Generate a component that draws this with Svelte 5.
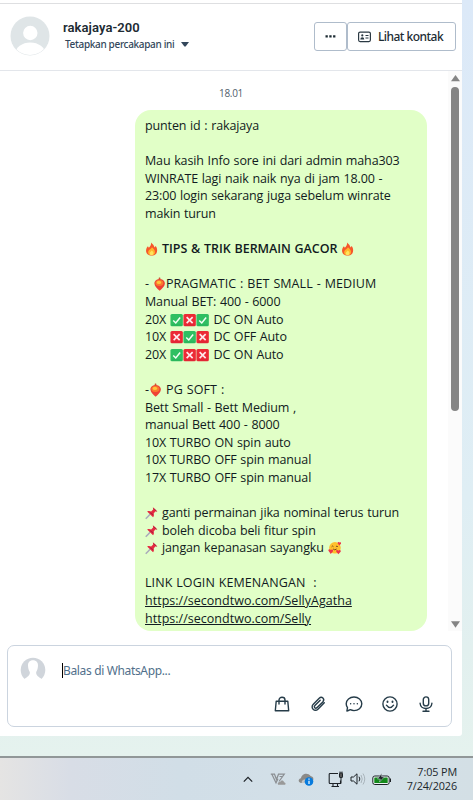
<script lang="ts">
	type Part = { text?: string; icon?: string; bold?: boolean; link?: boolean; wide?: boolean };

	const t = (text: string): Part => ({ text });
	const i = (icon: string): Part => ({ icon });

	const lines: Part[][] = [
		[t('punten id : rakajaya')],
		[],
		[t('Mau kasih Info sore ini dari admin maha303')],
		[t('WINRATE lagi naik naik nya di jam 18.00 -')],
		[t('23:00 login sekarang juga sebelum winrate')],
		[t('makin turun')],
		[],
		[i('fire'), { text: ' TIPS & TRIK BERMAIN GACOR ', bold: true }, i('fire')],
		[],
		[t('- '), i('lantern'), { text: 'PRAGMATIC : BET SMALL - MEDIUM', wide: true }],
		[t('Manual BET: 400 - 6000')],
		[t('20X '), i('check'), i('cross'), i('check'), t(' DC ON Auto')],
		[t('10X '), i('cross'), i('check'), i('cross'), t(' DC OFF Auto')],
		[t('20X '), i('check'), i('cross'), i('cross'), t(' DC ON Auto')],
		[],
		[t('-'), i('lantern'), { text: ' PG SOFT :', wide: true }],
		[t('Bett Small - Bett Medium ,')],
		[t('manual Bett 400 - 8000')],
		[t('10X TURBO ON spin auto')],
		[t('10X TURBO OFF spin manual')],
		[t('17X TURBO OFF spin manual')],
		[],
		[i('pin'), t(' ganti permainan jika nominal terus turun')],
		[i('pin'), t(' boleh dicoba beli fitur spin')],
		[i('pin'), t(' jangan kepanasan sayangku '), i('love')],
		[],
		[{ text: 'LINK LOGIN KEMENANGAN  :', wide: true }],
		[{ text: 'https://secondtwo.com/SellyAgatha', link: true }],
		[{ text: 'https://secondtwo.com/Selly', link: true }]
	];
</script>

{#snippet emoji(name: string)}
	<svg class="emoji" viewBox="0 0 13 14" aria-hidden="true">
		{#if name === 'fire'}
			<path d="M6 .5C7.500 2 9 3.500 9.300 5.400L10.600 4C12 6.200 12.300 8 11.800 10C11.100 12.700 9 13.600 6.500 13.600C3.200 13.600 .8 11.600 .9 8.600C1 6.700 1.800 5.400 2.800 4.300L3.700 5.800C4.900 4.400 6.300 2.700 6 .5Z" fill="#f6572b" />
			<path d="M6.800 5.300C8.800 7 10 8.500 9.800 10.400C9.600 12.300 8.300 13.200 6.400 13.200C4.300 13.200 3 12 3 10.200C3 8.700 4 8 5 7.300C5.800 6.700 6.600 6.200 6.800 5.300Z" fill="#ffb52b" />
			<path d="M6.500 8.500C8 9.700 8.500 10.500 8.300 11.500C8.100 12.600 7.300 13 6.400 13C5.200 13 4.500 12.300 4.600 11.200C4.700 10 6 9.700 6.500 8.500Z" fill="#ffe45c" />
		{:else if name === 'lantern'}
			<path d="M5.800 .6H7L7.600 3.200H5.200Z" fill="#c9562f" />
			<path d="M6.500 2.300C9.500 2 11.900 4 11.700 6.800C11.500 9.500 8.700 12 6.500 13.700C4.300 12 1.500 9.500 1.300 6.800C1.100 4 3.500 2 6.500 2.300Z" fill="#ef4136" />
			<ellipse cx="6.200" cy="6" rx="4" ry="3" fill="#f97a2f" />
			<ellipse cx="5.800" cy="5.400" rx="2.200" ry="1.600" fill="#ffc43c" />
		{:else if name === 'check'}
			<rect x=".3" y="1" width="12.400" height="12.300" rx="1.500" fill="#2fbf62" />
			<path d="M2 12H11.500" stroke="#20a453" opacity=".5" />
			<path d="M3.100 7.500L5.600 10L10 4.500" fill="none" stroke="#f4fff5" stroke-width="1.500" />
		{:else if name === 'cross'}
			<rect x=".3" y="1" width="12.400" height="12.300" rx="1.500" fill="#ec2a35" />
			<path d="M2 12H11.500" stroke="#c71d36" opacity=".5" />
			<path d="M3.500 4.200L9.500 10.200M9.500 4.200L3.500 10.200" stroke="#ffe9ec" stroke-width="1.700" />
		{:else if name === 'pin'}
			<path d="M.6 12.800L5 8.300" stroke="#a9a9ba" stroke-width="1.500" />
			<path d="M2 5.500C3.500 4.700 5 5 6 5.600L8 3.600L7.700 1.300L12.300 5.500L10 5.600L8.500 7.700C9 9 8.800 10.200 7.900 11.200Z" fill="#e52a40" />
			<path d="M5 6.700L8 8.800M8.500 2.500L11.300 5" stroke="#a81f3e" />
		{:else}
			<circle cx="6.800" cy="6.800" r="5.800" fill="#ffc02c" />
			<path d="M3.500 5.800Q4.300 4.300 5.300 5.700M7.800 5.700Q8.900 4.300 9.700 5.800M5 8Q6.500 9.700 8.500 8" fill="none" stroke="#6d3b18" stroke-width=".9" />
			<g fill="#ed3849">
				<path d="M2.600 13L.3 9.800C-.2 8.200 2 7.600 2.700 9C3.800 7.700 5.600 9 4.700 10.500Z" />
				<path d="M10.200 13.300L8 10.500C7.600 8.900 9.500 8.400 10.300 9.700C11.200 8.400 13.200 9.300 12.500 10.700Z" />
				<path d="M11.200 4.500L9.500 2.200C9.300 .8 10.900 .5 11.300 1.600C12.200 .7 13.400 1.700 12.900 2.800Z" />
			</g>
		{/if}
	</svg>
{/snippet}

<div class="screen">
	<div class="panel">
		<header class="header">
			<svg class="avatar" viewBox="0 0 40 40" aria-hidden="true">
				<defs><clipPath id="face"><circle cx="20" cy="20" r="19" /></clipPath></defs>
				<circle cx="20" cy="20" r="19.500" fill="#dfe5e7" />
				<g clip-path="url(#face)" fill="#fff">
					<circle cx="20.300" cy="17" r="7.200" />
					<ellipse cx="20.300" cy="38" rx="15" ry="11.500" />
				</g>
			</svg>
			<div class="who">
				<div class="name">rakajaya-200</div>
				<div class="assign">
					<span>Tetapkan percakapan ini</span>
					<svg width="8" height="5" viewBox="0 0 8 5"><path d="M0 0H8L4.600 4.600H3.400Z" fill="#33475b" /></svg>
				</div>
			</div>
			<button class="btn more" aria-label="More">
				<svg width="11" height="3" viewBox="0 0 11 3"><path d="M.5 .2H2.800V2.600H.5ZM4.300 .2H6.600V2.600H4.300ZM8.100 .2H10.400V2.600H8.100Z" fill="#1c2b33" /></svg>
			</button>
			<button class="btn contact">
				<svg width="13" height="12" viewBox="0 0 13 12" fill="none" stroke="#2b3943">
					<rect x=".6" y="1.100" width="11.800" height="9.500" rx="1.500" stroke-width="1.200" />
					<circle cx="4.300" cy="4.400" r="1.100" fill="#2b3943" stroke="none" />
					<path d="M2.300 8.600Q2.300 6.200 4.300 6.200T6.300 8.600Z" fill="#2b3943" stroke="none" />
					<path d="M7.500 4.500H10.500M7.500 7H10.500" stroke-width="1.200" />
				</svg>
				Lihat kontak
			</button>
		</header>

		<main class="chat">
			<div class="messages">
				<div class="time">18.01</div>
				<div class="bubble">
					{#each lines as line}
						<div class="line">{#each line as part}{#if part.icon}{@render emoji(part.icon)}{:else}<span class:bold={part.bold} class:link={part.link} class:wide={part.wide}>{part.text}</span>{/if}{/each}</div>
					{/each}
				</div>
			</div>
			<div class="scrollbar">
				<svg width="9" height="7" viewBox="0 0 9 7"><path d="M4.500 0L9 6.200H0Z" fill="#858585" /></svg>
				<div class="thumb"></div>
				<svg width="9" height="7" viewBox="0 0 9 7"><path d="M0 .3H9L4.500 6.700Z" fill="#858585" /></svg>
			</div>
		</main>

		<div class="composer">
			<div class="entry">
				<svg width="26" height="26" viewBox="0 0 26 26">
					<circle cx="13" cy="13" r="12.300" fill="#d0d5db" />
					<path d="M13 3.200C9.800 3.200 7.900 5.300 8 8.500C8.100 11 8.600 13 9.800 15C10.300 17.700 8 19.500 5.800 21L2.500 23V26H23.500V23L20.200 21C18 19.500 15.700 17.700 16.200 15C17.400 13 17.900 11 18 8.500C18.100 5.300 16.200 3.200 13 3.200Z" fill="#fff" />
				</svg>
				<span class="caret"></span>
				<span class="placeholder">Balas di WhatsApp...</span>
			</div>
			<div class="tools">
				<svg viewBox="0 0 18 18"><path d="M3.200 6.200H14.800L15.700 15.700H2.300ZM6 9V5C6 1.300 12 1.300 12 5V9" /></svg>
				<svg viewBox="0 0 18 18"><path d="M15.300 7.700L9.200 13.900C5.600 17.500.900 12.800 4.300 9.300L10.200 3.300C12.800 .7 16.300 4.200 13.800 6.900L8.100 12.600C6.400 14.300 4.300 12.100 5.900 10.500L11.200 5.200" /></svg>
				<svg viewBox="0 0 18 18"><path d="M3.300 15.500L1.900 16L2.500 12.600C1.500 11.300 1.200 10.100 1.200 8.800C1.200 4.900 4.700 2 9 2S16.800 4.900 16.800 8.800S13.300 15.600 9 15.600C7.500 15.600 6.300 15.200 5.300 14.700Z" /><path d="M5.600 8.700H5.700M8.950 8.700H9.050M12.300 8.700H12.400" /></svg>
				<svg viewBox="0 0 18 18"><circle cx="9" cy="9" r="7.100" /><path d="M5.400 10.200Q9 15 12.600 10.200" /><path d="M6.500 6.500V7M11.500 6.500V7" stroke-width="1.900" /></svg>
				<svg viewBox="0 0 18 18"><rect x="6.300" y="1.900" width="5.400" height="9" rx="2.700" /><path d="M3.100 8.300C3.400 15.300 14.600 15.300 14.900 8.300M9 13.500V16.200M6 16.200H12" /></svg>
			</div>
		</div>
	</div>

	<footer class="taskbar">
		<svg class="up" width="10" height="7" viewBox="0 0 10 7"><path d="M.8 5.700L5 1.300L9.200 5.700" fill="none" stroke="#1d2227" stroke-width="1.200" /></svg>
		<svg class="vz" width="16" height="14" viewBox="0 0 16 14" fill="none" stroke="#8b8f93" stroke-width="1.200">
			<path d="M.8 2.200H4.500L6.500 7.500L8.500 2.200H14.300L9 9.500M2 2.500L6 10.800L8 6.800M9.500 4.500H12" />
			<path d="M8 12.700C7 10.700 9 9.700 10 10.200C10.800 7.700 13.800 8 14 10.200C16 10.400 16 12.700 14.500 12.700Z" fill="#999" stroke="none" />
		</svg>
		<svg class="cloud" width="16" height="14" viewBox="0 0 16 14">
			<path d="M3 11C0 10.600-.2 6.800 3 6.200C3.400 2 9.500-.5 12.600 4.100C15 4.500 16 6.500 15 8.500L10 11Z" fill="#8b8a88" />
			<path d="M3.500 10.500C4 7.500 6 7 8 7.700C9.500 5.500 12 5.500 13.500 7V11H4Z" fill="#c4c4c3" />
			<circle cx="11" cy="9.500" r="4.300" fill="#087bdd" />
			<path d="M11 6.600V7.800M11 8.800V12" stroke="#fff" stroke-width="1.200" />
		</svg>
		<svg class="pc" width="16" height="17" viewBox="0 0 16 17" fill="none" stroke="#1d2227">
			<path d="M10 2.500H2Q1.200 2.500 1.200 3.300V11.500Q1.200 12.500 2 12.500H12.500V9.500M5 12.500V15.500M9.500 12.500V15.500M3.500 15.500H11" stroke-width="1.100" />
			<rect x="11.500" y="2" width="3" height="4.500" rx=".6" fill="#555" /><path d="M12 .5V2M14 .5V2M13 6.500V12.500" />
		</svg>
		<svg class="sound" width="16" height="14" viewBox="0 0 16 14" fill="none" stroke="#1d2227">
			<path d="M1 5H3.500L7 1.800V12.200L3.500 9H1ZM9 4.700Q10.700 7 9 9.300" />
			<path d="M11 3Q13.500 7 11 11M13 1.500Q16.500 7 13 12.500" stroke="#a9b4bb" />
		</svg>
		<svg class="battery" width="20" height="13" viewBox="0 0 20 13">
			<rect x=".8" y="3" width="16.400" height="8.500" rx="2" fill="#edf3f4" stroke="#1d2227" />
			<path d="M18.500 5.500V9" stroke="#1d2227" />
			<rect x="2.300" y="4.500" width="13.400" height="5.500" rx=".6" fill="#13891b" />
			<path d="M9.700 .3L5.500 6H8.300L7.500 9L12.500 3.800H9.700Z" fill="#1d2227" stroke="#dce7ed" stroke-width=".5" />
		</svg>
		<div class="clock">
			<div>7:05 PM</div>
			<div>7/24/2026</div>
		</div>
	</footer>
</div>

<style>
	:global(body) {
		margin: 0;
		overflow: hidden;
	}

	.screen {
		width: 473px;
		height: 800px;
		display: flex;
		flex-direction: column;
		background: linear-gradient(180deg, #dce9f8 0, #dfeef4 500px, #e2f0ef 650px, #e5f2ee 756px);
		font-family: 'Open Sans', 'Noto Sans', sans-serif;
		color: #111b21;
	}

	.panel {
		width: 462px;
		height: 736px;
		display: flex;
		flex-direction: column;
		background: #fff;
		border-radius: 0 0 3px;
	}

	.header {
		box-sizing: border-box;
		height: 68px;
		margin-top: 3px;
		border-top: 1px solid #dedfe1;
		border-bottom: 1px solid #e3e6eb;
		padding: 0 6px 0 10px;
		display: flex;
		align-items: center;
		flex-shrink: 0;
	}

	.avatar {
		width: 40px;
		height: 40px;
		margin-top: -2px;
	}

	.who {
		flex: 1;
		padding-left: 13px;
		margin-top: -3px;
	}

	.name {
		font-family: Roboto, sans-serif;
		font-weight: 600;
		font-size: 13px;
		line-height: 17px;
		letter-spacing: 0.08px;
		color: #202b33;
	}

	.assign {
		display: flex;
		align-items: center;
		gap: 7px;
		padding-left: 2px;
		font-family: 'Noto Sans', sans-serif;
		font-size: 10px;
		font-weight: 500;
		line-height: 17px;
		letter-spacing: -0.33px;
		color: #33475b;
	}

	.btn {
		box-sizing: border-box;
		height: 29px;
		margin: -1px 0 0;
		border: 1px solid #afbccb;
		border-radius: 3px;
		background: #fff;
		display: flex;
		align-items: center;
		justify-content: center;
		padding: 0;
		font: 500 12px 'Noto Sans', sans-serif;
		color: #1c2b33;
	}

	.more {
		width: 33px;
	}

	.contact {
		width: 109px;
		gap: 7px;
		padding-right: 2px;
		letter-spacing: -0.53px;
	}

	.chat {
		height: 560px;
		display: flex;
		flex-shrink: 0;
	}

	.messages {
		flex: 1;
		overflow: hidden;
	}

	.time {
		height: 39px;
		line-height: 45px;
		text-align: center;
		font-size: 10px;
		letter-spacing: -0.3px;
		color: #51606c;
		padding-left: 14px;
	}

	.bubble {
		box-sizing: border-box;
		width: 292px;
		height: 521px;
		margin-left: 135px;
		padding: 7px 10px;
		border-radius: 16px;
		background: #e1ffc7;
		font-size: 12.500px;
		letter-spacing: -0.13px;
		word-spacing: 0.6px;
		overflow: hidden;
	}

	.line {
		height: 17.600px;
		line-height: 17.600px;
		white-space: pre;
	}

	.emoji {
		width: 13.300px;
		height: 14px;
		vertical-align: -3px;
	}

	.bold {
		font-weight: 600;
		letter-spacing: -0.05px;
	}

	.wide {
		letter-spacing: 0.07px;
	}

	.link {
		letter-spacing: 0.02px;
		text-decoration: underline;
		text-underline-offset: 1px;
	}

	.scrollbar {
		width: 14px;
		display: flex;
		flex-direction: column;
		align-items: center;
		background: #fbfbfb;
		padding: 4px 0 3px;
		box-sizing: border-box;
	}

	.scrollbar svg:last-child {
		margin-top: auto;
	}

	.thumb {
		width: 8px;
		height: 324px;
		margin-top: 5px;
		border-radius: 4px;
		background: #858585;
	}

	.composer {
		box-sizing: border-box;
		width: 445px;
		height: 82px;
		margin: 14px 0 0 7px;
		border: 1px solid #cbd4df;
		border-radius: 7px;
		padding: 10px 16px 0 12px;
	}

	.entry {
		display: flex;
		align-items: center;
		height: 28px;
	}

	.caret {
		width: 1px;
		height: 15px;
		margin-left: 16px;
		background: #000;
	}

	.placeholder {
		font-family: 'Noto Sans', sans-serif;
		font-size: 12px;
		letter-spacing: -0.35px;
		color: #516f8b;
	}

	.tools {
		display: flex;
		justify-content: flex-end;
		gap: 18px;
		margin-top: 11px;
	}

	.tools svg {
		width: 18px;
		height: 18px;
		fill: none;
		stroke: #263c49;
		stroke-width: 1.400;
		stroke-linecap: round;
		stroke-linejoin: round;
	}

	.taskbar {
		box-sizing: border-box;
		height: 44px;
		margin-top: 20px;
		border-top: 2px solid #919798;
		padding-right: 16px;
		display: flex;
		align-items: center;
		background: linear-gradient(90deg, #e5e4e3 0, #d8dde6 70px, #d1dee7 180px, #d3e0e8 360px, #d3dfe5);
	}

	.up {
		margin-left: 243px;
	}

	.vz {
		margin-left: 17px;
	}

	.cloud {
		margin-left: 12px;
	}

	.pc {
		margin-left: 14px;
	}

	.sound {
		margin-left: 6px;
	}

	.battery {
		margin-left: 6px;
	}

	.clock {
		flex: 1;
		text-align: right;
		font-size: 10.800px;
		line-height: 14.500px;
		letter-spacing: -0.1px;
		color: #20272c;
		white-space: nowrap;
	}
</style>
